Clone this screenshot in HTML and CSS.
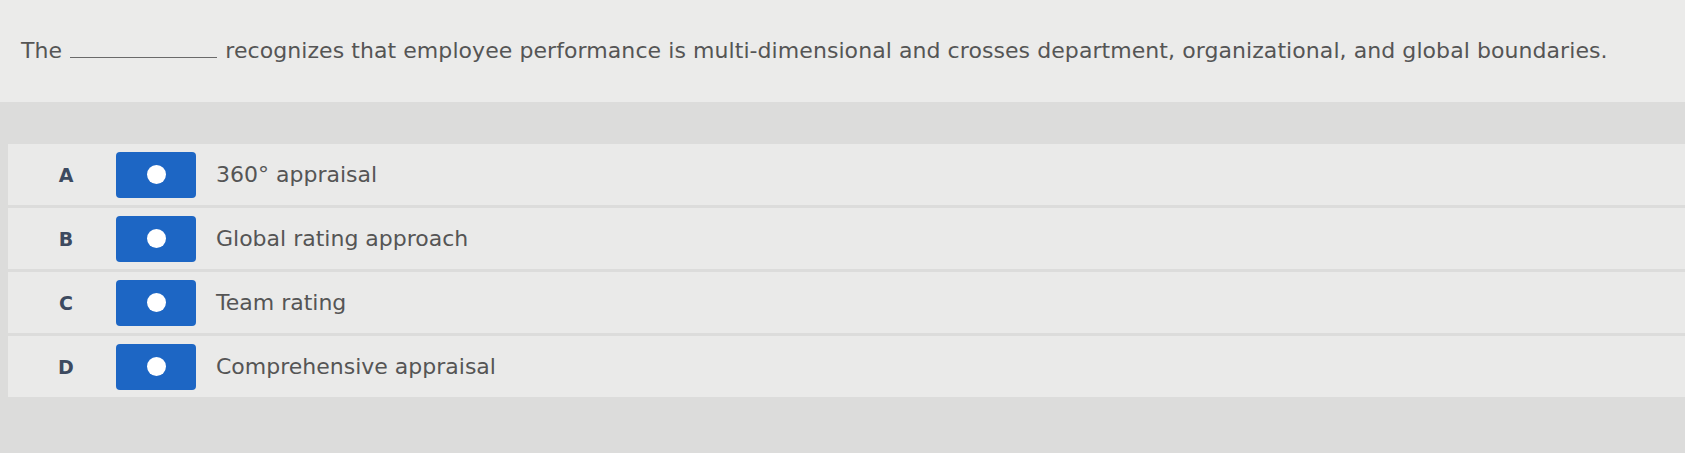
FILE: index.html
```html
<!DOCTYPE html>
<html lang="en">
<head>
<meta charset="utf-8">
<title>Question</title>
<link rel="stylesheet" href="styles.css">
</head>
<body>
<div class="page">
  <div class="question">
    <p class="prompt">The <span class="blank"></span> recognizes that employee performance is multi-dimensional and crosses department, organizational, and global boundaries.</p>
  </div>
  <div class="answers">
    <div class="row">
      <span class="letter">A</span>
      <span class="radio"><span class="dot"></span></span>
      <span class="label">360° appraisal</span>
    </div>
    <div class="row">
      <span class="letter">B</span>
      <span class="radio"><span class="dot"></span></span>
      <span class="label">Global rating approach</span>
    </div>
    <div class="row">
      <span class="letter">C</span>
      <span class="radio"><span class="dot"></span></span>
      <span class="label">Team rating</span>
    </div>
    <div class="row">
      <span class="letter">D</span>
      <span class="radio"><span class="dot"></span></span>
      <span class="label">Comprehensive appraisal</span>
    </div>
  </div>
</div>
</body>
</html>
```
FILE: styles.css
```css
html, body {
  margin: 0;
  padding: 0;
}
body {
  background: #dcdcdb;
  font-family: "DejaVu Sans", "Noto Sans", sans-serif;
  color: #555555;
  width: 1685px;
  height: 453px;
  overflow: hidden;
}
.page {
  display: flex;
  flex-direction: column;
}
.question {
  height: 102px;
  background: #ebebea;
  padding-left: 21px;
  box-sizing: border-box;
  padding-top: 37px;
}
.prompt {
  margin: 0;
  font-size: 22px;
  line-height: 28px;
  letter-spacing: 0.07px;
  color: #555555;
  white-space: nowrap;
}
.blank {
  display: inline-block;
  width: 147px;
  height: 1px;
  border-bottom: 1.5px solid #6a6a6a;
  vertical-align: baseline;
  margin: 0 1px;
}
.answers {
  padding-top: 42px;
  display: flex;
  flex-direction: column;
  gap: 3px;
}
.row {
  height: 61px;
  margin-left: 8px;
  background: #eaeae9;
  display: flex;
  align-items: center;
  padding-left: 38px;
}
.letter {
  width: 40px;
  text-align: center;
  font-weight: 700;
  font-size: 19px;
  color: #3d4a60;
}
.radio {
  margin-left: 30px;
  width: 80px;
  height: 46px;
  border-radius: 4px;
  background: #1d66c4;
  display: flex;
  align-items: center;
  justify-content: center;
}
.dot {
  width: 19px;
  height: 19px;
  border-radius: 50%;
  background: #ffffff;
}
.label {
  margin-left: 20px;
  font-size: 22px;
  color: #555555;
}
```
